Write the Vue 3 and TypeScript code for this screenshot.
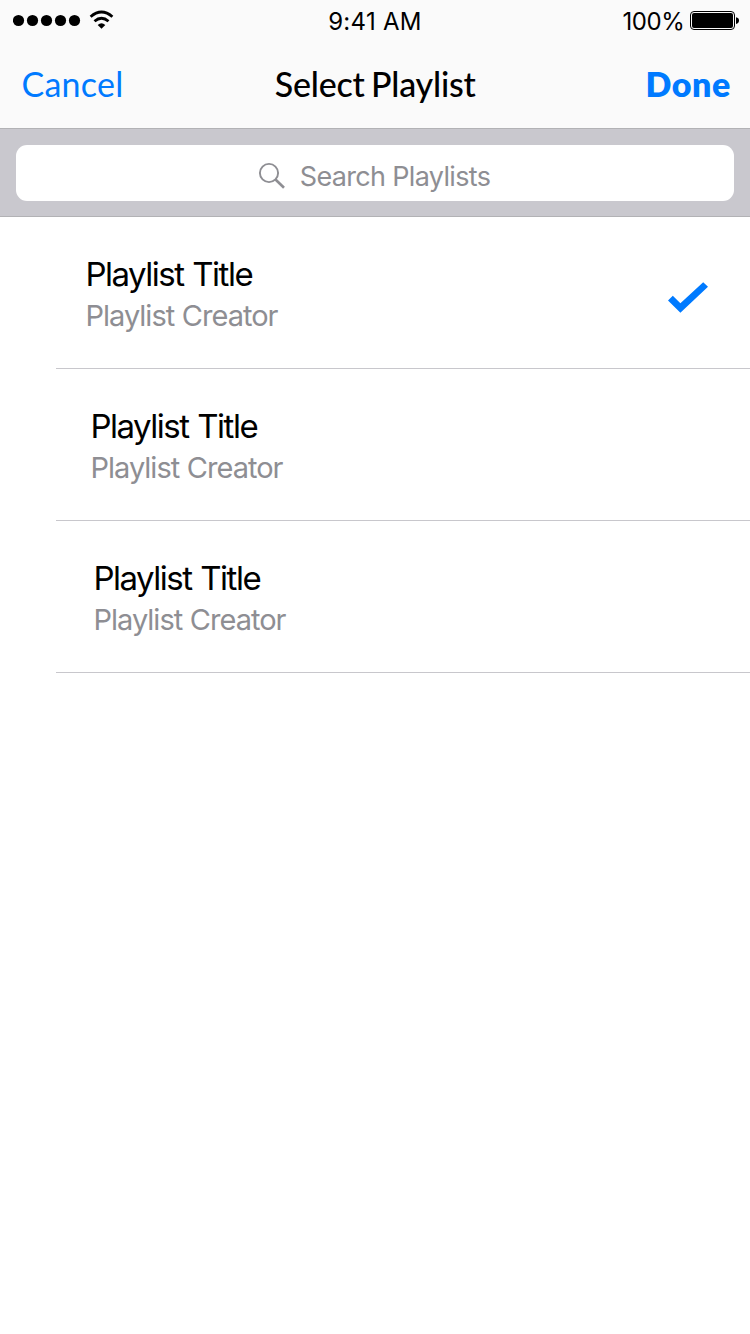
<script setup lang="ts">
import { ref } from 'vue'

interface Playlist {
  id: number
  title: string
  creator: string
  indent: number
}

const playlists: Playlist[] = [
  { id: 1, title: 'Playlist Title', creator: 'Playlist Creator', indent: 29.5 },
  { id: 2, title: 'Playlist Title', creator: 'Playlist Creator', indent: 34.5 },
  { id: 3, title: 'Playlist Title', creator: 'Playlist Creator', indent: 37.5 },
]
const selected = ref(1)
</script>

<template>
  <div class="screen">
    <header class="header">
      <div class="status">
        <div class="signal">
          <svg width="104" height="24" viewBox="0 0 104 24" aria-hidden="true">
            <circle v-for="n in 5" :key="n" :cx="4.5 + n * 14" cy="12.5" r="5.6" transform="translate(-13 0)" />
            <g fill="none" stroke="#000" stroke-width="2.8">
              <path d="M77.6 8.7Q88.5 -0.6 99.4 8.7" />
              <path d="M81.5 13.2Q88.5 7.2 95.5 13.2" />
            </g>
            <path d="M84.7 17Q88.5 13.6 92.3 17L88.5 20.8Z" />
          </svg>
        </div>
        <span class="time">9:41 AM</span>
        <div class="battery">
          <span class="percent">100%</span>
          <svg width="49" height="20" viewBox="0 0 49 20" aria-hidden="true">
            <rect x="0.5" y="0.5" width="44" height="18" rx="3.5" fill="none" stroke="#000" />
            <rect x="2" y="2" width="41" height="15" rx="2" />
            <path d="M46 6.3Q49 6.8 49 9.5Q49 12.4 46 12.9Z" />
          </svg>
        </div>
      </div>
      <nav class="nav">
        <button class="action cancel">Cancel</button>
        <h1 class="heading">Select Playlist</h1>
        <button class="action done">Done</button>
      </nav>
    </header>

    <div class="search">
      <div class="field">
        <svg width="28" height="28" viewBox="0 0 28 28" fill="none" stroke="#8e8e93" aria-hidden="true">
          <circle cx="11" cy="11" r="9.1" stroke-width="1.9" />
          <path d="M17.5 17.5L26 25.7" stroke-width="2.6" />
        </svg>
        <span class="placeholder">Search Playlists</span>
      </div>
    </div>

    <ul class="list">
      <li v-for="item in playlists" :key="item.id" class="row" @click="selected = item.id">
        <div class="info" :style="{ paddingLeft: item.indent + 'px' }">
          <span class="title">{{ item.title }}</span>
          <span class="creator">{{ item.creator }}</span>
        </div>
        <svg v-if="selected === item.id" class="check" width="40" height="32" viewBox="0 0 40 32" aria-hidden="true">
          <path d="M0 18.5L4.8 13.8L12.4 21.3L35.2 0.2L40 4.8L12.4 30.8Z" fill="#007aff" />
        </svg>
      </li>
    </ul>
  </div>
</template>

<style>
body {
  margin: 0;
  background: #fff;
}
</style>

<style scoped>
.screen {
  width: 750px;
  height: 1334px;
  overflow: hidden;
  background: #fff;
  color: #000;
  font-family: Inter, "Liberation Sans", sans-serif;
}
.header {
  box-sizing: border-box;
  height: 129px;
  background: #fafafa;
  border-bottom: 1px solid #b2b2b5;
}
.status,
.nav {
  display: grid;
  grid-template-columns: 1fr auto 1fr;
}
.status {
  height: 40px;
  font-size: 24px;
  line-height: 28px;
}
.signal {
  padding: 8px 0 0 13px;
}
.signal svg,
.battery svg {
  display: block;
}
.time {
  padding-top: 8px;
  letter-spacing: 0.3px;
}
.battery {
  display: flex;
  justify-content: flex-end;
  gap: 5.5px;
  padding: 8px 11px 0 0;
}
.percent {
  letter-spacing: -0.4px;
}
.battery svg {
  margin-top: 3px;
}
.nav {
  align-items: center;
  height: 88px;
  padding: 0 19px 0 21.5px;
  font-family: Lato, "Liberation Sans", sans-serif;
  line-height: 40px;
}
.action {
  padding: 0;
  border: 0;
  background: none;
  color: #007aff;
  font: inherit;
  font-size: 34px;
  white-space: nowrap;
}
.cancel {
  justify-self: start;
  letter-spacing: 0.25px;
}
.done {
  justify-self: end;
  font-weight: 800;
  letter-spacing: 0.6px;
}
.heading {
  margin: 0 2px 0 0;
  font-size: 34px;
  font-weight: 500;
  letter-spacing: -0.2px;
  word-spacing: -2px;
}
.search {
  box-sizing: border-box;
  height: 88px;
  padding: 16px 16px 15px;
  background: #c9c8ce;
  border-bottom: 1px solid #b2b2b5;
}
.field {
  display: flex;
  justify-content: center;
  height: 56px;
  padding-right: 2px;
  box-sizing: border-box;
  border-radius: 11px;
  background: #fff;
}
.field svg {
  margin: 17px 14px 0 0;
}
.placeholder {
  padding-top: 15px;
  color: #8e8e93;
  font-size: 27px;
  line-height: 34px;
  letter-spacing: -0.67px;
}
.list {
  margin: 0;
  padding: 0 0 0 56px;
  list-style: none;
}
.row {
  box-sizing: border-box;
  display: flex;
  justify-content: space-between;
  height: 152px;
  padding-right: 42px;
  border-bottom: 1px solid #c8c7cc;
}
.info {
  display: flex;
  flex-direction: column;
  padding-top: 37px;
}
.title {
  font-size: 33px;
  line-height: 41px;
  letter-spacing: -1.5px;
  word-spacing: 1px;
}
.creator {
  color: #8e8e93;
  font-size: 29px;
  line-height: 42px;
  letter-spacing: -1px;
  word-spacing: 0.5px;
}
.check {
  margin-top: 65px;
}
</style>
